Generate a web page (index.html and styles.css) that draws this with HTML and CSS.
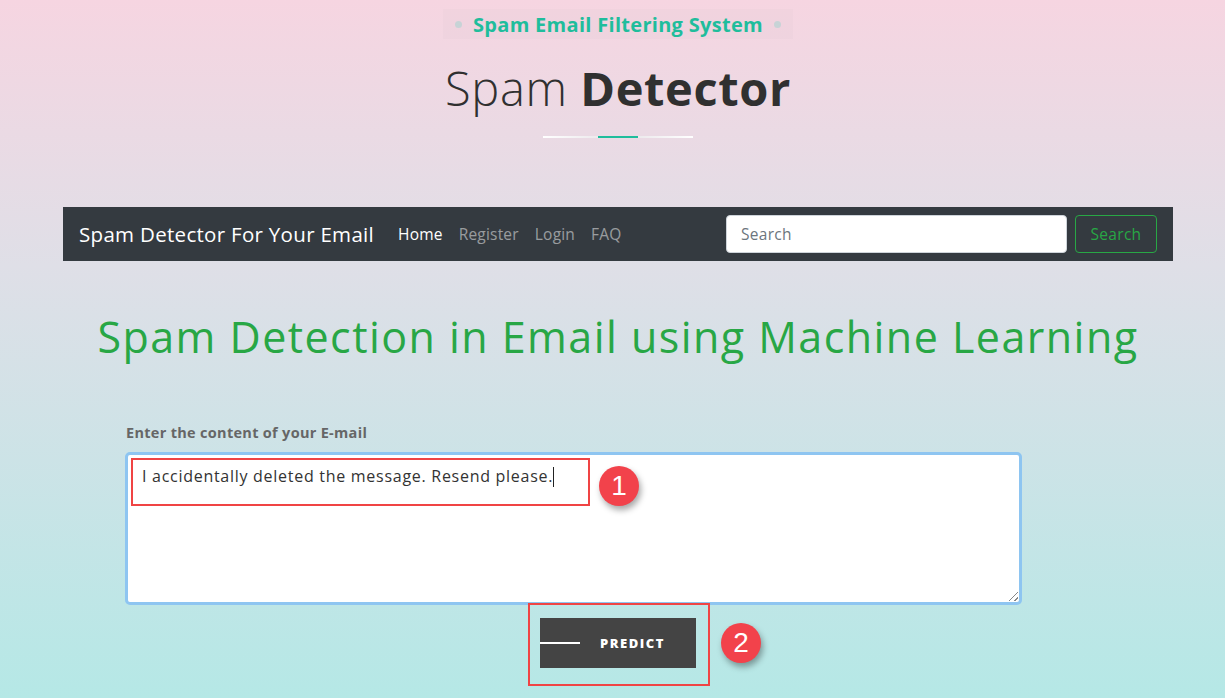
FILE: index.html
```html
<!DOCTYPE html>
<html lang="en">
<head>
<meta charset="utf-8">
<title>Spam Detector</title>
<link rel="stylesheet" href="styles.css">
</head>
<body>
<header class="hero">
  <div class="tag"><span class="dot"></span><span class="tag-text">Spam Email Filtering System</span><span class="dot"></span></div>
  <h2 class="title"><span class="thin">Spam</span> <span class="bold">Detector</span></h2>
  <div class="divider"><span class="divider-accent"></span></div>
</header>

<nav class="navbar">
  <a class="brand" href="#">Spam Detector For Your Email</a>
  <ul class="nav-links">
    <li><a class="active" href="#">Home</a></li>
    <li><a href="#">Register</a></li>
    <li><a href="#">Login</a></li>
    <li><a href="#">FAQ</a></li>
  </ul>
  <form class="search">
    <input class="search-input" type="text" placeholder="Search">
    <button class="search-btn" type="button">Search</button>
  </form>
</nav>

<main class="main">
  <h1 class="headline">Spam Detection in Email using Machine Learning</h1>
  <form class="predict-form">
    <label class="field-label" for="msg">Enter the content of your E-mail</label>
    <div class="textarea-wrap">
      <div class="textarea">
        <div class="annot-box"><span class="typed">I accidentally deleted the message. Resend please.</span><span class="caret"></span></div>
        <span class="badge badge-1">1</span>
        <span class="grip"></span>
      </div>
    </div>
    <div class="btn-row">
      <div class="btn-annot">
        <button class="predict-btn" type="button"><span class="btn-line"></span><span class="btn-text">PREDICT</span></button>
        <span class="badge badge-2">2</span>
      </div>
    </div>
  </form>
</main>
</body>
</html>
```

FILE: styles.css
```css
* { box-sizing: border-box; }
html, body { height: 100%; }
body {
  margin: 0;
  font-family: "Open Sans", "Noto Sans", sans-serif;
  background: linear-gradient(180deg, #f6d5e1 0%, #dfdfe7 38%, #b5e8e6 100%);
  color: #333;
  overflow: hidden;
}

.hero {
  text-align: center;
  padding-top: 9px;
  margin-left: 11px;
}
.tag {
  display: inline-flex;
  align-items: center;
  gap: 11px;
  height: 30px;
  padding: 0 12px;
  background: rgba(200, 180, 190, 0.07);
}
.dot {
  width: 7px;
  height: 7px;
  border-radius: 50%;
  background: #c7d3d6;
}
.tag-text {
  color: #1fbd9c;
  font-weight: 700;
  font-size: 20px;
  letter-spacing: 0.3px;
}
.title {
  margin: 18px 0 0;
  font-size: 47px;
  line-height: 62px;
  letter-spacing: 0.6px;
  color: #303030;
  font-weight: 400;
}
.title .thin { font-weight: 300; }
.title .bold { font-weight: 700; }
.divider {
  width: 150px;
  height: 2px;
  margin: 17px auto 0;
  background: linear-gradient(90deg, #ffffff 0%, #e6e2e6 50%, #ffffff 100%);
  display: flex;
  justify-content: center;
}
.divider-accent {
  width: 40px;
  height: 2px;
  background: #1fbd9c;
}

.navbar {
  margin: 69px 0 0 63px;
  width: 1110px;
  height: 54px;
  background: #343a40;
  display: flex;
  align-items: center;
  padding: 0 16px;
}
.brand {
  color: #fff;
  text-decoration: none;
  font-size: 20.5px;
  letter-spacing: 0.3px;
  margin-right: 16px;
}
.nav-links {
  list-style: none;
  display: flex;
  margin: 0;
  padding: 0;
}
.nav-links a {
  display: block;
  padding: 0 8px;
  font-size: 15.5px;
  letter-spacing: 0.2px;
  color: rgba(255,255,255,0.5);
  text-decoration: none;
}
.nav-links a.active { color: #fff; }
.search {
  margin-left: auto;
  display: flex;
  gap: 8px;
}
.search-input {
  width: 341px;
  height: 38px;
  border: 1px solid #ced4da;
  border-radius: 4px;
  padding: 0 14px;
  font: inherit;
  font-size: 15.5px;
  letter-spacing: 0.3px;
  color: #495057;
  background: #fff;
}
.search-input::placeholder { color: #6c757d; }
.search-btn {
  height: 38px;
  width: 82px;
  border: 1px solid #28a745;
  border-radius: 4px;
  background: transparent;
  color: #28a745;
  font: inherit;
  font-size: 15.5px;
  letter-spacing: 0.3px;
}

.main { padding-top: 48px; }
.headline {
  margin: 0;
  text-align: center;
  margin-left: 11px;
  font-size: 43px;
  line-height: 56px;
  letter-spacing: 1.45px;
  font-weight: 400;
  color: #28a745;
}
.predict-form {
  margin: 58px 0 0 125px;
  width: 897px;
}
.field-label {
  display: block;
  margin-left: 1px;
  font-size: 14.5px;
  letter-spacing: 0.3px;
  font-weight: 700;
  color: #666;
  line-height: 20px;
}
.textarea-wrap { margin-top: 9px; }
.textarea {
  position: relative;
  height: 153px;
  background: #fff;
  border: 3px solid #8ec5f1;
  border-radius: 5px;
  padding: 3px 3px;
}
.annot-box {
  width: 459px;
  height: 48px;
  border: 2px solid #f04444;
  padding: 4px 0 0 9px;
  display: flex;
  align-items: flex-start;
}
.typed {
  font-size: 16px;
  letter-spacing: 0.72px;
  color: #333;
  line-height: 24px;
}
.caret {
  width: 1px;
  height: 20px;
  margin-top: 3px;
  background: #222;
}
.badge {
  position: absolute;
  width: 40px;
  height: 40px;
  border-radius: 50%;
  background: #f2424b;
  color: #fff;
  font-family: "Liberation Sans", Arial, sans-serif;
  font-size: 28px;
  line-height: 40px;
  text-align: center;
  box-shadow: 2px 4px 6px rgba(0,0,0,0.35);
}
.badge-1 { left: 471px; top: 11px; }
.grip {
  position: absolute;
  right: 1px;
  bottom: 1px;
  width: 12px;
  height: 12px;
  background: repeating-linear-gradient(135deg, transparent 0 2px, #888 2px 3px, transparent 3px 4px);
  clip-path: polygon(100% 0, 100% 100%, 0 100%);
}
.btn-row {
  display: flex;
  margin-left: 403px;
  margin-top: -2px;
}
.btn-annot {
  position: relative;
  width: 182px;
  height: 83px;
  border: 2px solid #f04444;
  padding: 13px 0 0 10px;
}
.predict-btn {
  width: 156px;
  height: 50px;
  background: #444;
  border: 0;
  padding: 0;
  display: flex;
  align-items: center;
  cursor: pointer;
}
.btn-line {
  width: 40px;
  height: 2px;
  background: #fff;
}
.btn-text {
  margin-left: 20px;
  color: #fff;
  font-family: "Open Sans", sans-serif;
  font-size: 13px;
  font-weight: 800;
  letter-spacing: 1.5px;
}
.badge-2 { left: 191px; top: 18px; }
```
